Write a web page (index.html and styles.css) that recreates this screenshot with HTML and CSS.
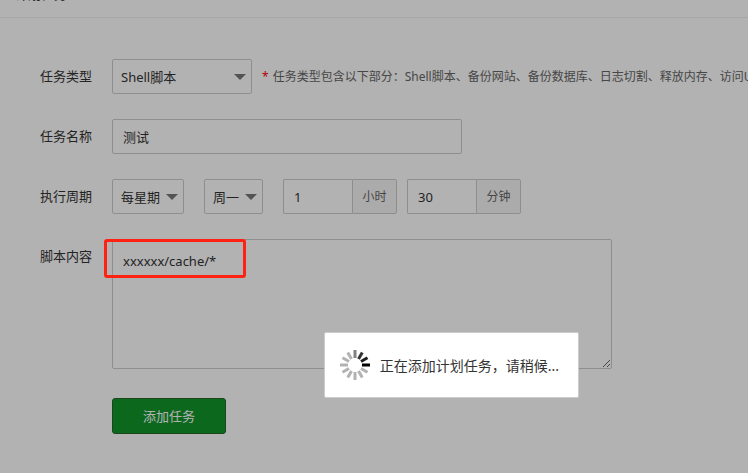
FILE: index.html
```html
<!DOCTYPE html>
<html lang="zh-CN">
<head>
    <meta charset="UTF-8">
    <meta name="viewport" content="width=device-width, initial-scale=1.0">
    <title>计划任务</title>
    <link rel="stylesheet" href="styles.css">
</head>
<body>
    <header class="panel-title"><h3>计划任务</h3></header>
    <form class="task-form">
        <div class="row">
            <label class="name" for="taskType">任务类型</label>
            <div class="select type-select">
                <select id="taskType">
                    <option>Shell脚本</option>
                </select>
            </div>
            <p class="tips"><span class="star">*</span> 任务类型包含以下部分：Shell脚本、备份网站、备份数据库、日志切割、释放内存、访问URL</p>
        </div>
        <div class="row">
            <label class="name" for="taskName">任务名称</label>
            <input class="text-input task-name" id="taskName" type="text" value="测试">
        </div>
        <div class="row">
            <label class="name" for="cycle">执行周期</label>
            <div class="select cycle-select">
                <select id="cycle">
                    <option>每星期</option>
                </select>
            </div>
            <div class="select week-select">
                <select id="week" aria-label="星期">
                    <option>周一</option>
                </select>
            </div>
            <div class="unit-group">
                <input class="text-input" id="hour" type="text" value="1">
                <label class="unit" for="hour">小时</label>
            </div>
            <div class="unit-group">
                <input class="text-input" id="minute" type="text" value="30">
                <label class="unit" for="minute">分钟</label>
            </div>
        </div>
        <div class="row script-row">
            <label class="name" for="script">脚本内容</label>
            <div class="script-box">
                <textarea id="script">xxxxxx/cache/*</textarea>
                <span class="marker"></span>
            </div>
        </div>
        <button class="submit" type="button">添加任务</button>
    </form>

    <div class="shade">
        <div class="loading" role="status">
            <svg class="spinner" viewBox="0 0 32 32" fill="none" stroke-width="3">
                <path d="M23 16h8" stroke="#000"/>
                <path d="M22 12.500l6.500-3.750" stroke="#1c1c1c"/>
                <path d="M19.500 10l3.750-6.500" stroke="#333"/>
                <path d="M16 9V1" stroke="#808080"/>
                <path d="M12.500 10L8.750 3.500M10 12.500L3.500 8.750M9 16H1M10 19.500l-6.500 3.750M12.500 22l-3.750 6.500M16 23v8M19.500 22l3.750 6.500M22 19.500l6.500 3.750" stroke="#b2b2b2"/>
            </svg>
            <span>正在添加计划任务，请稍候...</span>
        </div>
    </div>
</body>
</html>
```

FILE: styles.css
```css
* {
    box-sizing: border-box;
}

body {
    margin: 0;
    min-height: 100vh;
    overflow: hidden;
    background: #fff;
    color: #333;
    font-family: "Noto Sans", "Noto Sans CJK SC", sans-serif;
    font-size: 13px;
}

input,
select,
textarea,
button {
    font: inherit;
    color: inherit;
}

.panel-title {
    display: flex;
    align-items: flex-end;
    height: 18px;
    padding: 0 15px 13px;
    border-bottom: 1px solid #f0f0f0;
}

.panel-title h3 {
    margin: 0;
    font-size: 13px;
    font-weight: normal;
    line-height: 20px;
}

.task-form {
    padding: 41px 0 39px 40px;
}

.row {
    display: flex;
    align-items: flex-start;
    margin-bottom: 25px;
}

.name {
    flex: none;
    width: 72px;
    line-height: 35px;
}

.select {
    position: relative;
    flex: none;
    height: 35px;
}

.select::after {
    content: "";
    position: absolute;
    top: 15px;
    right: 6px;
    border: 6px solid transparent;
    border-top-color: #777;
    border-bottom: 0;
    pointer-events: none;
}

.select select {
    appearance: none;
    width: 100%;
    height: 100%;
    padding: 0 8px;
    border: 1px solid #ccc;
    border-radius: 2px;
    background: #fff;
}

.type-select {
    width: 140px;
}

.cycle-select {
    width: 72px;
    margin-right: 20px;
}

.week-select {
    width: 59px;
    margin-right: 20px;
}

.tips {
    margin: 0 0 0 10px;
    color: #666;
    font-size: 12px;
    line-height: 35px;
    white-space: nowrap;
}

.star {
    margin-right: 1px;
    color: #f00;
}

.text-input {
    height: 35px;
    padding: 0 10px;
    border: 1px solid #ccc;
    border-radius: 2px;
    background: #fff;
}

.task-name {
    width: 350px;
}

.unit-group {
    display: flex;
    margin-right: 10px;
}

.unit-group .text-input {
    width: 69px;
    border-right: 0;
    border-radius: 2px 0 0 2px;
}

.unit {
    width: 45px;
    border: 1px solid #ccc;
    border-radius: 0 2px 2px 0;
    background: #f5f5f5;
    color: #666;
    font-size: 12px;
    line-height: 33px;
    text-align: center;
}

.script-row {
    margin-bottom: 29px;
}

.script-box {
    position: relative;
    width: 500px;
}

.script-box textarea {
    display: block;
    width: 100%;
    height: 130px;
    padding: 10px;
    border: 1px solid #ccc;
    border-radius: 2px;
    background: #fff;
    line-height: 22px;
}

/* red frame around the command, stays above the shade */
.marker {
    position: absolute;
    z-index: 2;
    top: 0;
    left: -8px;
    width: 142px;
    height: 39px;
    border: 3px solid #ff2212;
    border-radius: 3px;
}

.submit {
    width: 114px;
    height: 36px;
    margin-left: 72px;
    padding: 0 0 2px;
    border: 1px solid #266826;
    border-radius: 3px;
    background: #10952a;
    color: #fff;
    cursor: pointer;
}

.shade {
    position: fixed;
    z-index: 1;
    inset: 0;
    display: flex;
    align-items: flex-end;
    justify-content: center;
    padding: 0 0 75px 155px;
    background: rgba(0, 0, 0, 0.3);
}

.loading {
    display: flex;
    align-items: center;
    gap: 9px;
    height: 66px;
    padding: 0 19px 0 14px;
    border: 1px solid #ccc;
    border-radius: 2px;
    background: #fff;
    font-size: 14px;
    white-space: nowrap;
}

.spinner {
    width: 32px;
    height: 32px;
}
```
